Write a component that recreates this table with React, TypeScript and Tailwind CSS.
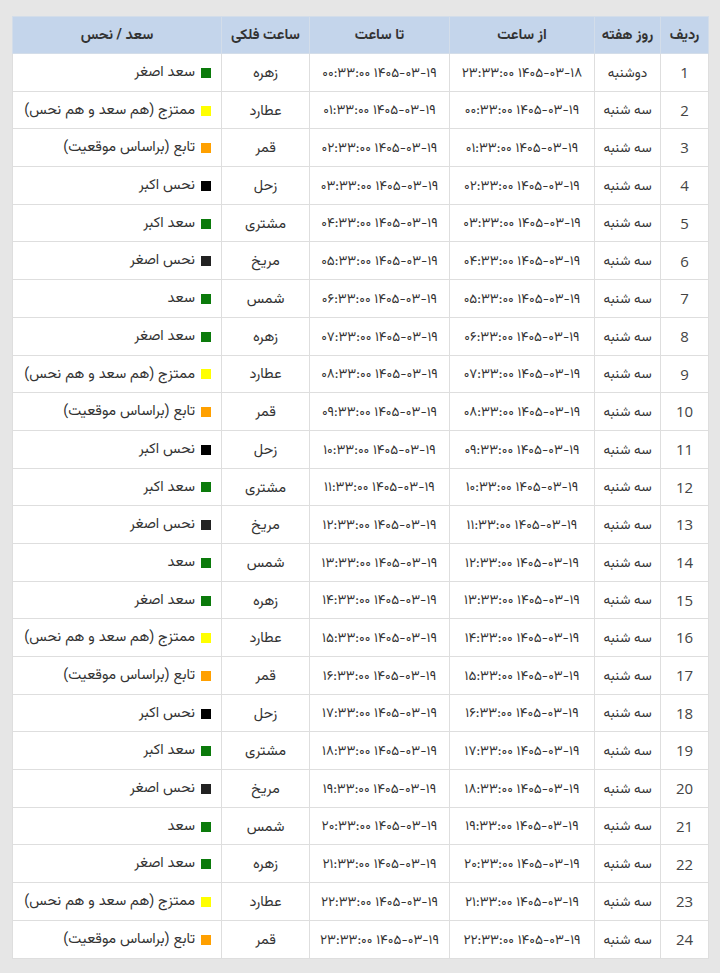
const planets = ["زهره", "عطارد", "قمر", "زحل", "مشتری", "مریخ", "شمس"];

const fortune: Record<string, { label: string; color: string }> = {
  زهره: { label: "سعد اصغر", color: "bg-[#0b7a0b]" },
  عطارد: { label: "ممتزج (هم سعد و هم نحس)", color: "bg-[#ffff00]" },
  قمر: { label: "تابع (براساس موقعیت)", color: "bg-[#ffa000]" },
  زحل: { label: "نحس اکبر", color: "bg-[#000000]" },
  مشتری: { label: "سعد اکبر", color: "bg-[#0b7a0b]" },
  مریخ: { label: "نحس اصغر", color: "bg-[#222222]" },
  شمس: { label: "سعد", color: "bg-[#0b7a0b]" },
};

const fa = (n: number) =>
  String(n)
    .padStart(2, "0")
    .replace(/\d/g, (d) => "۰۱۲۳۴۵۶۷۸۹"[Number(d)]);

const rows = Array.from({ length: 24 }, (_, i) => {
  const startHour = (i + 23) % 24;
  const startDay = i === 0 ? "۱۸" : "۱۹";
  return {
    id: i + 1,
    day: i === 0 ? "دوشنبه" : "سه شنبه",
    from: `۱۴۰۵-۰۳-${startDay} ${fa(startHour)}:۳۳:۰۰`,
    to: `۱۴۰۵-۰۳-۱۹ ${fa(i)}:۳۳:۰۰`,
    planet: planets[i % 7],
  };
});

const cell = "border border-[#dedede] pt-[3px] text-center";

export default function App() {
  return (
    <div className="min-h-[973px] bg-[#e6e6e6] px-3 pt-4 pb-4 font-['Vazirmatn','Noto_Sans_Arabic','DejaVu_Sans',sans-serif] text-[#333]">
      <table dir="rtl" className="w-[696px] table-fixed border-collapse bg-white text-[14.5px]">
        <colgroup>
          <col className="w-[48px]" />
          <col className="w-[66px]" />
          <col className="w-[145px]" />
          <col className="w-[140px]" />
          <col className="w-[88px]" />
          <col className="w-[209px]" />
        </colgroup>
        <thead>
          <tr className="h-[37px] bg-[#c4d5eb] font-bold">
            <th className="border border-[#d3dde9] pt-[2px] text-center">ردیف</th>
            <th className="border border-[#d3dde9] pt-[2px] text-center">روز هفته</th>
            <th className="border border-[#d3dde9] pt-[2px] text-center">از ساعت</th>
            <th className="border border-[#d3dde9] pt-[2px] text-center">تا ساعت</th>
            <th className="border border-[#d3dde9] pt-[2px] text-center">ساعت فلکی</th>
            <th className="border border-[#d3dde9] pt-[2px] text-center">سعد / نحس</th>
          </tr>
        </thead>
        <tbody>
          {rows.map((r) => {
            const f = fortune[r.planet];
            return (
              <tr key={r.id} className="h-[37.7px]">
                <td className="border border-[#dedede] text-center font-['Open_Sans',sans-serif] text-[15px] text-[#444]">
                  {r.id}
                </td>
                <td className={`${cell} text-[13.5px]`}>{r.day}</td>
                <td className={`${cell} text-[13.5px]`}>{r.from}</td>
                <td className={`${cell} text-[13.5px]`}>{r.to}</td>
                <td className={cell}>{r.planet}</td>
                <td className="border border-[#dedede] pt-[3px] pr-[10px] text-right">
                  <span className="inline-flex items-center gap-[6px]">
                    <span className={`inline-block h-[10px] w-[10px] ${f.color}`} />
                    <span>{f.label}</span>
                  </span>
                </td>
              </tr>
            );
          })}
        </tbody>
      </table>
    </div>
  );
}
